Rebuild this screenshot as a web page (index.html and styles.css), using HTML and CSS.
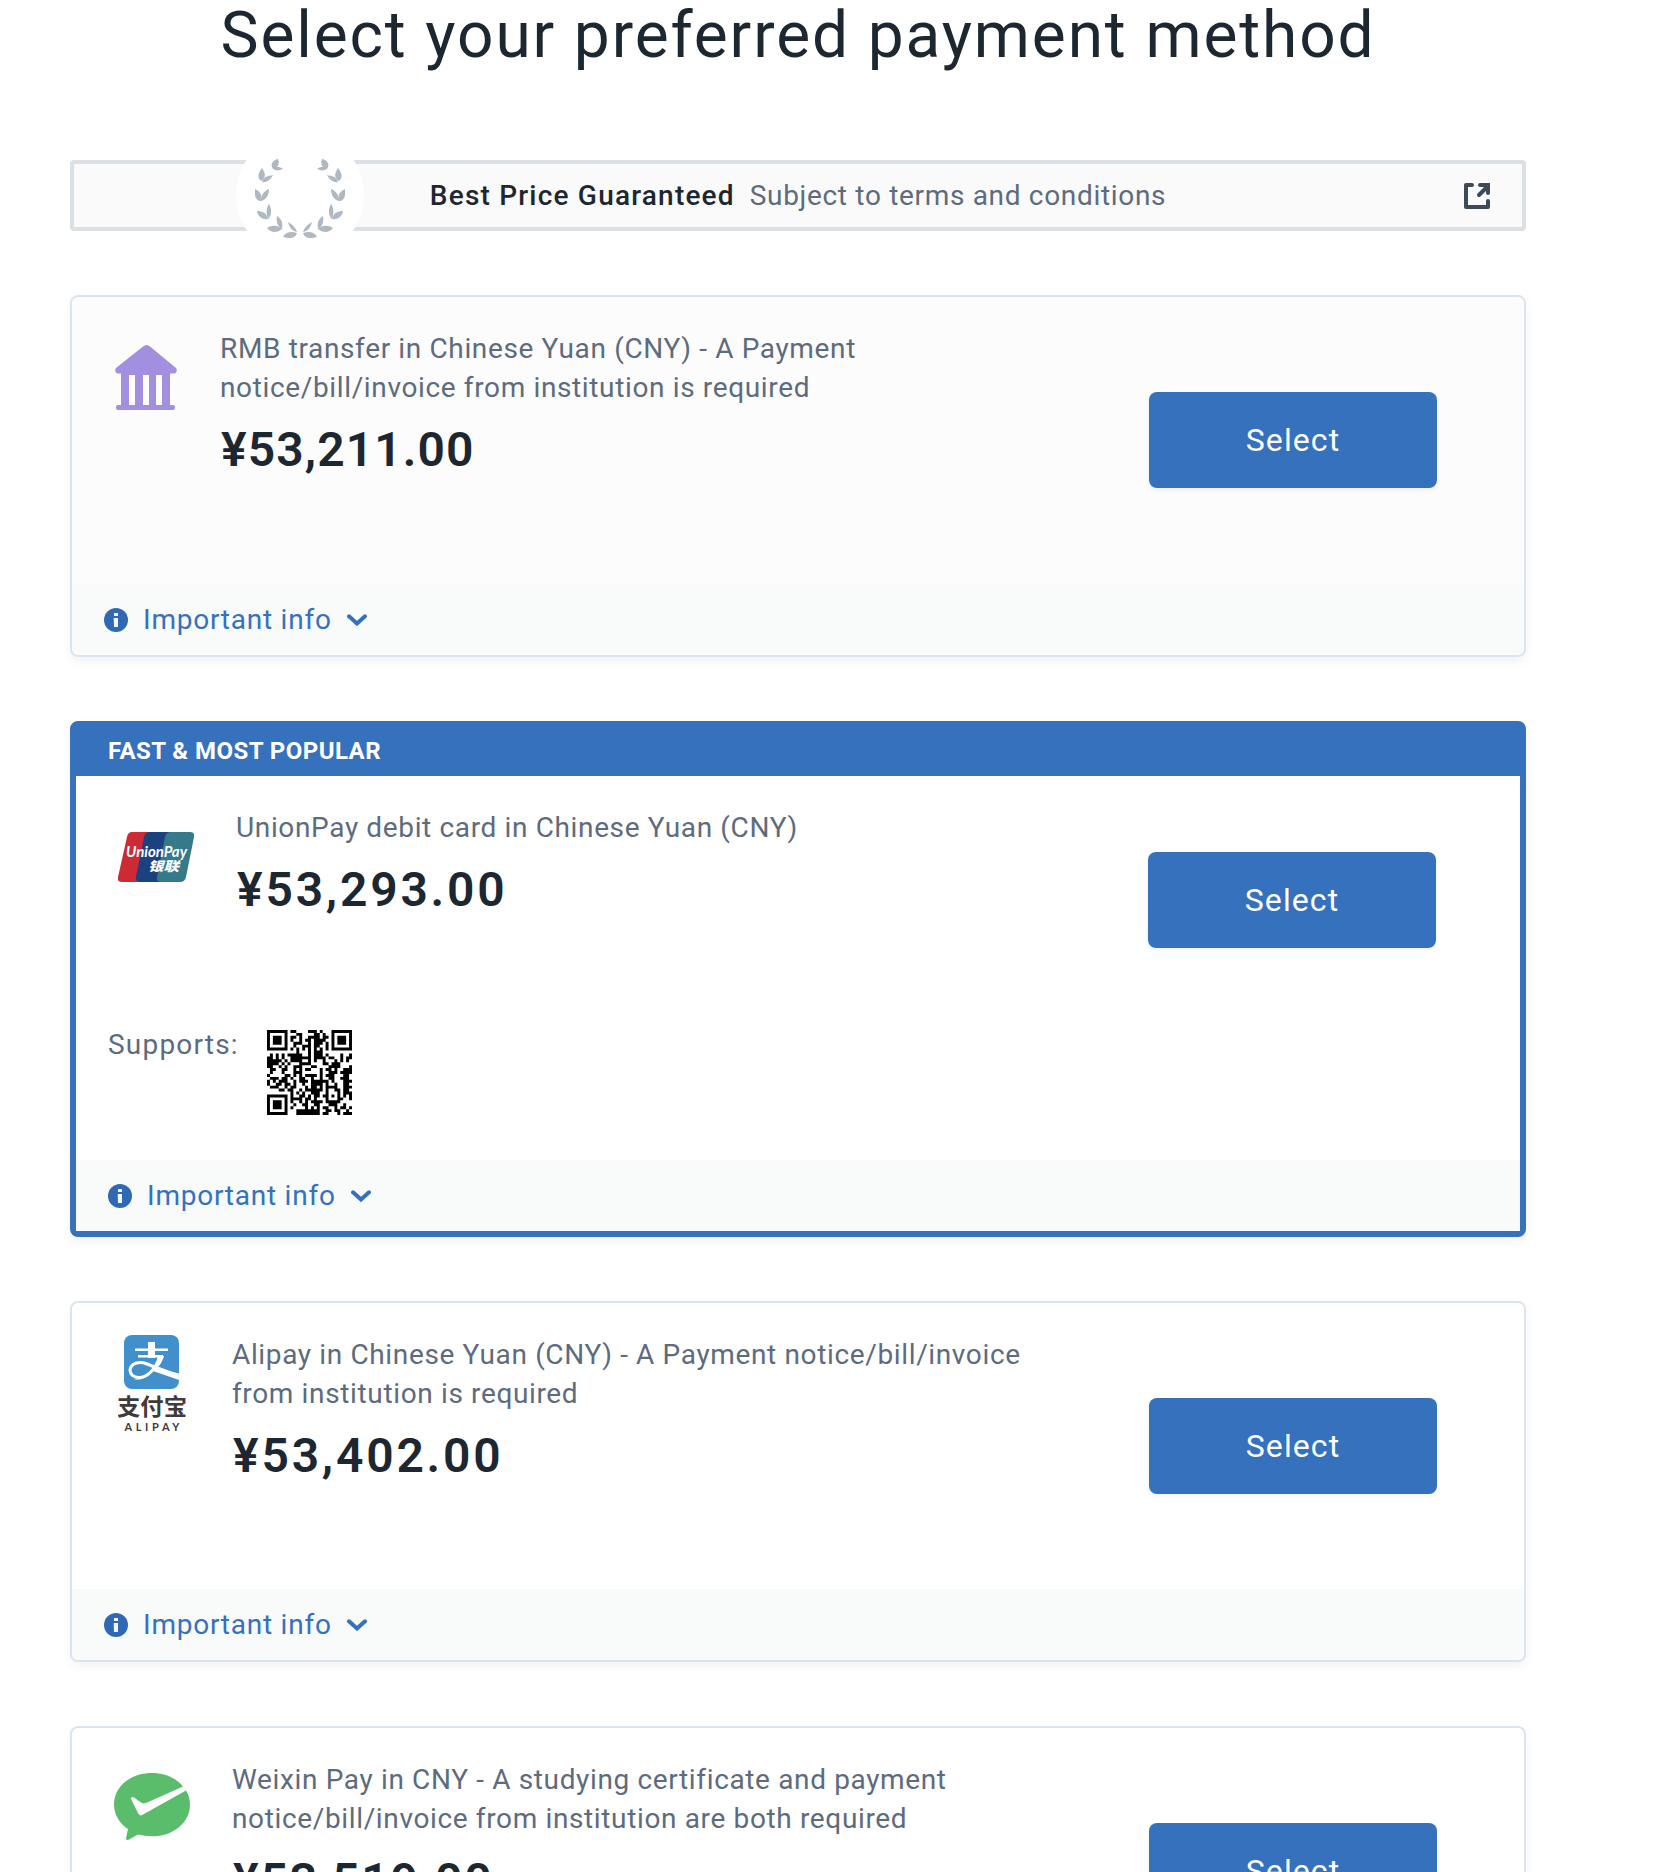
FILE: index.html
```html
<!DOCTYPE html>
<html lang="en">
<head>
    <meta charset="UTF-8">
    <title>Select your preferred payment method</title>
    <link rel="stylesheet" href="styles.css">
</head>
<body>
<svg hidden>
    <symbol id="info" viewBox="0 0 24 24">
        <circle cx="12" cy="12" r="12" fill="#2f69b3"/>
        <path d="M10 5h4v3h-4zM9.700 10h4.300v9h-4z" fill="#f2f6fa"/>
    </symbol>
    <symbol id="chevron" viewBox="0 0 20 12">
        <path d="M2 2.300l8 7.200 8-7.200" fill="none" stroke="#3571bd" stroke-width="4" stroke-linecap="round"/>
    </symbol>
</svg>

<main class="page">
    <h1 class="title">Select your preferred payment method</h1>

    <div class="guarantee">
        <div class="seal">
            <svg width="90" height="80" viewBox="0 0 90 80" fill="#b0b8c1">
                <g id="branch">
                    <path d="M23 0C17 1 15 6 18 10C23 9 25 5 23 0Z"/>
                    <path d="M18 10C21 7 25 8 28 9.500C25 12 21 12 18 10Z"/>
                    <path d="M7 9C3 14 2 19 6 22C11 19 11 15 7 9Z"/>
                    <path d="M7 23C8 18 13 17 18 16C16 20 12 24 7 23Z"/>
                    <path d="M0 30C-1 37 1 42 6 42C8 37 5 32 0 30Z"/>
                    <path d="M6 42C6 36 9 32 14 30C14 36 11 41 6 42Z"/>
                    <path d="M2 52C3 58 8 61 13 60C12 54 7 52 2 52Z"/>
                    <path d="M13 60C11 54 11 49 14 45C17 50 17 56 13 60Z"/>
                    <path d="M12 69C16 74 22 74 27 70C23 66 17 66 12 69Z"/>
                    <path d="M27 70C22 67 21 62 22 57C27 60 28 65 27 70Z"/>
                    <path d="M28 77.500C33 80 40 80 42 74C36 72 31 73 28 77.500Z"/>
                    <path d="M42 73C37 72 34 68 33 63C38 66 41 69 42 73Z"/>
                </g>
                <use href="#branch" transform="matrix(-1 0 0 1 90 0)"/>
            </svg>
        </div>
        <p class="guarantee-text"><strong>Best Price Guaranteed</strong><span>Subject to terms and conditions</span></p>
        <svg class="external" width="26" height="26" viewBox="0 0 26 26">
            <path d="M8 2H2v22h22v-6" fill="none" stroke="#3d4a5a" stroke-width="4" stroke-linecap="round" stroke-linejoin="round"/>
            <path d="M15 12l8-8" stroke="#3d4a5a" stroke-width="4" stroke-linecap="round"/>
            <path d="M16 0h10v10a2 2 0 0 1-4 0V4h-6a2 2 0 0 1 0-4z" fill="#3d4a5a"/>
        </svg>
    </div>

    <section class="card card-muted">
        <div class="card-body">
            <div class="logo logo-bank">
                <svg width="62" height="66" viewBox="0 0 62 66" fill="#a28fe0">
                    <path d="M28 1.500q3.500-3 7 0L61 23q2 3-1 5.500H2Q-1 26 1 23z"/>
                    <path d="M6 28h8v32H6zM20 28h8v32h-8zM34 28h7v32h-7zM47 28h8v32h-8z"/>
                    <rect x="6" y="26" width="49" height="4"/>
                    <rect x="1" y="60" width="59" height="5" rx="2"/>
                </svg>
            </div>
            <div class="details">
                <p class="name">RMB transfer in Chinese Yuan (CNY) - A Payment<br>notice/bill/invoice from institution is required</p>
                <p class="price price-narrow">¥53,211.00</p>
            </div>
            <button class="select">Select</button>
        </div>
        <div class="card-footer">
            <svg width="24" height="24"><use href="#info"/></svg>
            <a>Important info</a>
            <svg class="chevron" width="20" height="12"><use href="#chevron"/></svg>
        </div>
    </section>

    <section class="card card-popular">
        <div class="ribbon">FAST &amp; MOST POPULAR</div>
        <div class="card-body">
            <div class="logo logo-unionpay">
                <svg width="76" height="50" viewBox="0 0 76 50">
                    <path d="M14 0H32L22 50H4Q-1 50 0 45L9 5Q10 0 14 0Z" fill="#cc2b35"/>
                    <path d="M32 0H54L44 50H22Q17 50 18 45L26 5Q27 0 32 0Z" fill="#1b427e"/>
                    <path d="M53 0H72Q77 0 76 5L68 45Q67 50 62 50H43Q38 50 39 45L47 5Q48 0 53 0Z" fill="#35798a"/>
                    <text class="up-latin" x="8" y="25" textLength="61" lengthAdjust="spacingAndGlyphs">UnionPay</text>
                    <text class="up-cjk" x="30" y="38.500" textLength="31" lengthAdjust="spacingAndGlyphs">银联</text>
                </svg>
            </div>
            <div class="details">
                <p class="name">UnionPay debit card in Chinese Yuan (CNY)</p>
                <p class="price">¥53,293.00</p>
            </div>
            <button class="select">Select</button>
        </div>
        <div class="supports">
            <span>Supports:</span>
            <svg id="qr" width="85" height="85" viewBox="0 0 29 29"></svg>
        </div>
        <div class="card-footer">
            <svg width="24" height="24"><use href="#info"/></svg>
            <a>Important info</a>
            <svg class="chevron" width="20" height="12"><use href="#chevron"/></svg>
        </div>
    </section>

    <section class="card">
        <div class="card-body">
            <div class="logo logo-alipay">
                <svg width="68" height="98" viewBox="0 0 68 98">
                    <rect x="6" y="0" width="55" height="54" rx="8" fill="#4190cc"/>
                    <path d="M30 7h7v16h-7zM17 13.500h33v2.500H17zM20 20h25v2.500H20z" fill="#fff"/>
                    <path d="M42 21C39 33 30 42 22 42.500C15 43 12 39 12 35C13 28 21 26 29 29C37 32 50 37 61 41" fill="none" stroke="#fff" stroke-width="3"/>
                    <path d="M40 21h6C44 28 41 31 39 33L61 38.500V45L35 36C29 43 22 46 16 44C28 43 37 33 40 21Z" fill="#fff"/>
                    <text class="ali-cjk" x="-1" y="80" textLength="70" lengthAdjust="spacingAndGlyphs">支付宝</text>
                    <text class="ali-latin" x="6.500" y="95.500" textLength="55">ALIPAY</text>
                </svg>
            </div>
            <div class="details">
                <p class="name">Alipay in Chinese Yuan (CNY) - A Payment notice/bill/invoice<br>from institution is required</p>
                <p class="price">¥53,402.00</p>
            </div>
            <button class="select">Select</button>
        </div>
        <div class="card-footer">
            <svg width="24" height="24"><use href="#info"/></svg>
            <a>Important info</a>
            <svg class="chevron" width="20" height="12"><use href="#chevron"/></svg>
        </div>
    </section>

    <section class="card">
        <div class="card-body">
            <div class="logo logo-weixin">
                <svg width="76" height="67" viewBox="0 0 76 67">
                    <path d="M38 0C17 0 0 13 0 31.500C0 42 6 51 14 56L12 65Q12 68 15 66.500L24 61.500Q31 63.300 38 63.300C59 63.300 76 50 76 31.500C76 26 74.500 21 72 17.500L29 41.500Q26 43.500 24.500 41L17 26Q17 23 20 24.500L27 29.500Q29 31 32 30L69 13.500C62 5 51 0 38 0Z" fill="#5abd6b"/>
                </svg>
            </div>
            <div class="details">
                <p class="name">Weixin Pay in CNY - A studying certificate and payment<br>notice/bill/invoice from institution are both required</p>
                <p class="price price-medium">¥53,519.00</p>
            </div>
            <button class="select">Select</button>
        </div>
        <div class="card-footer">
            <svg width="24" height="24"><use href="#info"/></svg>
            <a>Important info</a>
            <svg class="chevron" width="20" height="12"><use href="#chevron"/></svg>
        </div>
    </section>
</main>

<script>
    const modules = [
        '#######.##....###.#...#######',
        '#.....#...##....##.#..#.....#',
        '#.###.#.##.#..####.##.#.###.#',
        '#.###.#.#..#.##.####..#.###.#',
        '#.###.#..###..#.###.#.#.###.#',
        '#.....#..#..###.##..#.#.....#',
        '#######.#.#.#.#.#.#.#.#######',
        '..........#...#.###..........',
        '.#.#.#.#####..#.###.#....#..#',
        '##.#.#..#######.####.##..#.##',
        '#####.#.####..#.#..#...#.#.#.',
        '####.#.#...####....##.###....',
        '##..#.#..###...##....####...#',
        '.##..##..#.#.##...#.##.#..###',
        '.#...#...###......#..###.####',
        '#.....##.#.#.####.#.###...##.',
        '.###.##.#..##..#..#..##..###.',
        '#.#.###..#.###.######.#...###',
        '#..##.##.#..#..####.#..#..##.',
        '.###..#.##...#.##.#.####..###',
        '....##.##..#.######.#..##.##.',
        '........#.#.#..###..#...#.###',
        '#######.#..##.#.##.##.#.#.#.#',
        '#.....#.####.##.#...#...##..#',
        '#.###.#.#..#.#.####.#####....',
        '#.###.#..#..##..##...###..#..',
        '#.###.#.#....#.#.#.##..#.##.#',
        '#.....#...########..##.##..#.',
        '#######...########.##...#.###'
    ];

    let path = '';
    modules.forEach((row, y) => {
        for (let x = 0; x < row.length; x++) {
            if (row[x] === '#') {
                path += `M${x} ${y}h1v1h-1z`;
            }
        }
    });
    document.getElementById('qr').innerHTML = `<path d="${path}"/>`;
</script>
</body>
</html>
```
FILE: styles.css
```css
* {
    box-sizing: border-box;
}

body {
    height: 1872px;
    margin: 0;
    overflow: hidden;

    color: #5d6b7e;
    background-color: white;
    font-family: Roboto, sans-serif;
    font-size: 28px;
    letter-spacing: .68px;
}

p {
    margin: 0;
}

svg {
    display: block;
    flex: none;
}

svg[hidden] {
    display: none;
}

.page {
    display: flex;
    flex-direction: column;
    gap: 64px;

    width: 1456px;
    margin-left: 70px;
}

.title {
    height: 96px;
    margin: 0;

    color: #1c2731;
    font-size: 64px;
    font-weight: 400;
    line-height: 71px;
    letter-spacing: 1.87px;
    text-align: center;
}

.guarantee {
    position: relative;
    display: flex;
    align-items: center;
    justify-content: center;

    height: 71px;

    border: 4px solid #dbe0e4;
    border-radius: 4px;
    background-color: #fafafa;
}

.seal {
    position: absolute;
    top: -33px;
    left: 162px;

    display: flex;
    align-items: center;
    justify-content: center;

    width: 128px;
    height: 128px;
    padding-top: 7px;

    border-radius: 50%;
    background-color: white;
}

.guarantee-text {
    display: flex;
    gap: 15px;
}

.guarantee strong {
    color: #1c2731;
    font-weight: 500;
    letter-spacing: 1.2px;
}

.external {
    position: absolute;
    right: 32px;
}

.card {
    flex: none;

    border: 2px solid #dce5ee;
    border-radius: 8px;
    background-color: white;
    box-shadow: 0 4px 10px rgba(60, 90, 140, .08);
}

.card-body {
    display: flex;
    align-items: flex-start;

    height: 286px;
    padding: 32px 87px 0 43px;
}

.card-muted {
    background-color: #fcfcfc;
}

.card-muted .card-body {
    padding-bottom: 1px;
    height: 287px;
}

.logo {
    flex: none;

    width: 117px;
}

.logo-bank {
    width: 105px;
    padding-top: 16px;
}

.logo-unionpay {
    width: 118px;
    padding-top: 24px;
}

.logo-alipay {
    padding-left: 3px;
}

.logo-weixin {
    width: 118px;
    margin-left: -1px;
    padding-top: 13px;
}

.details {
    flex: 1;
}

.name {
    line-height: 39px;
    letter-spacing: .64px;
    white-space: nowrap;
}

.price {
    margin-top: 15px;
    padding-left: 1px;

    color: #1c2731;
    font-size: 48px;
    font-weight: 600;
    line-height: 56px;
    letter-spacing: 2.8px;
}

.price-narrow {
    letter-spacing: 1.1px;
}

.price-medium {
    letter-spacing: 1.8px;
}

.select {
    align-self: center;

    width: 288px;
    height: 96px;
    margin-top: -32px;
    padding: 0;

    color: white;
    border: 0;
    border-radius: 8px;
    background-color: #3571bd;
    box-shadow: 0 2px 4px rgba(0, 0, 0, .06);
    font-family: inherit;
    font-size: 32px;
    letter-spacing: 1.1px;
}

.card-footer {
    display: flex;
    align-items: center;

    height: 71px;
    padding: 0 32px;

    color: #3571bd;
    border-radius: 0 0 6px 6px;
    background-color: #f9fafa;
    letter-spacing: .76px;
}

.card-footer a {
    margin: 0 15px;
}

.card-popular {
    border: 6px solid #3571bd;
}

.card-popular .card-body {
    height: 248px;
    padding: 32px 84px 0 42px;
}

.card-popular .card-footer {
    border-radius: 0;
}

.ribbon {
    height: 49px;
    padding-left: 32px;

    color: white;
    background-color: #3571bd;
    font-size: 24px;
    font-weight: 700;
    line-height: 48px;
    letter-spacing: .45px;
}

.supports {
    display: flex;
    align-items: flex-start;
    gap: 28px;

    height: 136px;
    padding: 6px 32px 0;

    line-height: 30px;
    letter-spacing: 1.2px;
}

.up-latin {
    fill: white;
    font: italic 700 15px Lato, sans-serif;
    letter-spacing: 0;
}

.up-cjk {
    fill: white;
    font: italic 900 13px "Noto Sans CJK SC", sans-serif;
    letter-spacing: 0;
}

.ali-cjk {
    fill: #3f3b3a;
    font: 700 23px "Noto Sans CJK SC", sans-serif;
    letter-spacing: 0;
}

.ali-latin {
    fill: #3f3b3a;
    font: 700 11px Lato, sans-serif;
    letter-spacing: 0;
}
```
